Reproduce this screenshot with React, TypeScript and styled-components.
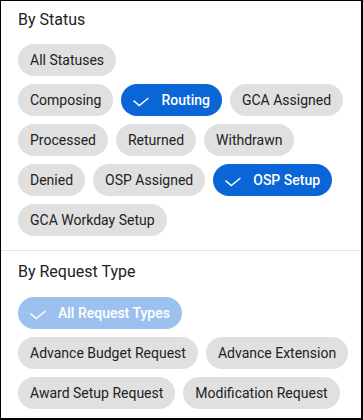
import React from "react";
import styled, { createGlobalStyle, css } from "styled-components";

const GlobalStyle = createGlobalStyle`
  html, body {
    margin: 0;
    padding: 0;
    background: #ffffff;
  }
  body {
    font-family: Roboto, "Liberation Sans", Arial, sans-serif;
    -webkit-font-smoothing: antialiased;
  }
  * { box-sizing: border-box; }
`;

const Panel = styled.div`
  width: 363px;
  height: 420px;
  border-style: solid;
  border-color: #000000;
  border-width: 1px 2px 2px 1px;
  background: #ffffff;
  display: flex;
  flex-direction: column;
`;

const Section = styled.section<{ $top: number; $bottom: number; $divided?: boolean }>`
  padding: ${(p) => p.$top}px 8px ${(p) => p.$bottom}px 17px;
  ${(p) =>
    p.$divided &&
    css`
      border-top: 1px solid #e3e3e3;
    `}
`;

const Title = styled.h2<{ $gap: number }>`
  margin: 0 0 ${(p) => p.$gap}px 0;
  font-size: 16px;
  line-height: 24px;
  font-weight: 400;
  color: #222222;
`;

const ChipList = styled.div`
  display: flex;
  flex-direction: column;
  align-items: flex-start;
  gap: 8px;
`;

const ChipWrap = styled.div`
  display: flex;
  flex-wrap: wrap;
  gap: 8px;
`;

const Chip = styled.button<{ $selected?: boolean; $disabled?: boolean }>`
  display: inline-flex;
  align-items: center;
  height: 32px;
  border: none;
  border-radius: 16px;
  padding: 0 12px;
  margin: 0;
  font-family: Roboto, "Liberation Sans", Arial, sans-serif;
  font-size: 14px;
  line-height: 20px;
  font-weight: 400;
  white-space: nowrap;
  cursor: pointer;
  background: #e0e0e0;
  color: #222222;
  ${(p) =>
    p.$selected &&
    css`
      background: #0a66d6;
      color: #ffffff;
      padding-left: 10px;
      font-weight: 500;
    `}
  ${(p) =>
    p.$disabled &&
    css`
      opacity: 0.4;
      cursor: default;
    `}
`;

const CheckBox = styled.svg`
  width: 18px;
  height: 18px;
  margin-right: 12px;
  flex: none;
`;

const Check = () => (
  <CheckBox viewBox="0 0 18 18" aria-hidden="true">
    <path
      d="M3.1 10.1 L8.3 14.6 L16.9 7.5"
      fill="none"
      stroke="#ffffff"
      strokeWidth="1.4"
      strokeLinecap="square"
      strokeLinejoin="miter"
    />
  </CheckBox>
);

type ChipData = { label: string; selected?: boolean; disabled?: boolean };

const FilterChip = ({ label, selected, disabled }: ChipData) => (
  <Chip type="button" $selected={selected} $disabled={disabled}>
    {selected && <Check />}
    {label}
  </Chip>
);

const statuses: ChipData[] = [
  { label: "Composing" },
  { label: "Routing", selected: true },
  { label: "GCA Assigned" },
  { label: "Processed" },
  { label: "Returned" },
  { label: "Withdrawn" },
  { label: "Denied" },
  { label: "OSP Assigned" },
  { label: "OSP Setup", selected: true },
  { label: "GCA Workday Setup" },
];

const requestTypes: ChipData[] = [
  { label: "Advance Budget Request" },
  { label: "Advance Extension" },
  { label: "Award Setup Request" },
  { label: "Modification Request" },
];

export default function App() {
  return (
    <>
      <GlobalStyle />
      <Panel>
        <Section $top={7} $bottom={14}>
          <Title $gap={12}>By Status</Title>
          <ChipList>
            <FilterChip label="All Statuses" />
            <ChipWrap>
              {statuses.map((c) => (
                <FilterChip key={c.label} {...c} />
              ))}
            </ChipWrap>
          </ChipList>
        </Section>
        <Section $top={9} $bottom={9} $divided>
          <Title $gap={13}>By Request Type</Title>
          <ChipList>
            <FilterChip label="All Request Types" selected disabled />
            <ChipWrap>
              {requestTypes.map((c) => (
                <FilterChip key={c.label} {...c} />
              ))}
            </ChipWrap>
          </ChipList>
        </Section>
      </Panel>
    </>
  );
}
